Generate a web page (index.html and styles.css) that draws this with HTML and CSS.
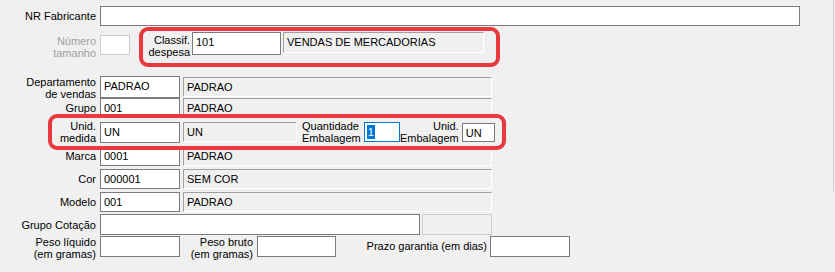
FILE: index.html
```html
<!DOCTYPE html>
<html lang="pt-BR">
<head>
  <meta charset="UTF-8" />
  <title>Cadastro de produto</title>
  <link rel="stylesheet" href="styles.css">
</head>
<body>
  <div class="form">

    <div class="row r-nr">
      <label class="lbl w96">NR Fabricante</label>
      <div class="box w700"></div>
    </div>

    <div class="row r-num">
      <label class="lbl w96 off">Número<br>tamanho</label>
      <div class="box off w30"></div>
      <div class="mark m-desp">
        <label class="lbl w47">Classif.<br>despesa</label>
        <div class="box w89 tall">101</div>
        <div class="ro w201">VENDAS DE MERCADORIAS</div>
      </div>
    </div>

    <div class="row r-dep">
      <label class="lbl w96">Departamento<br>de vendas</label>
      <div class="box w80 h22">PADRAO</div>
      <div class="ro w310">PADRAO</div>
    </div>

    <div class="row r-grp">
      <label class="lbl w96">Grupo</label>
      <div class="box w80">001</div>
      <div class="ro w310">PADRAO</div>
    </div>

    <div class="row mark r-unid">
      <label class="lbl w44">Unid.<br>medida</label>
      <div class="box w80 h21">UN</div>
      <div class="ro w114">UN</div>
      <label class="lbl left qtd">Quantidade<br>Embalagem</label>
      <div class="box w36 focus"><span class="sel">1</span></div>
      <label class="lbl w59">Unid.<br>Embalagem</label>
      <div class="box w33 h19">UN</div>
    </div>

    <div class="row r-marca">
      <label class="lbl w96">Marca</label>
      <div class="box w80">0001</div>
      <div class="ro w310">PADRAO</div>
    </div>

    <div class="row r-cor">
      <label class="lbl w96">Cor</label>
      <div class="box w80">000001</div>
      <div class="ro w310">SEM COR</div>
    </div>

    <div class="row r-mod">
      <label class="lbl w96">Modelo</label>
      <div class="box w80">001</div>
      <div class="ro w310">PADRAO</div>
    </div>

    <div class="row r-cot">
      <label class="lbl w96">Grupo Cotação</label>
      <div class="box w320 h21"></div>
      <div class="dis w70"></div>
    </div>

    <div class="row r-peso">
      <label class="lbl w96">Peso líquido<br>(em gramas)</label>
      <div class="box w80 h21"></div>
      <label class="lbl w69">Peso bruto<br>(em gramas)</label>
      <div class="box w79 h21"></div>
      <label class="lbl w147 pz">Prazo garantia (em dias)</label>
      <div class="box w80 h21"></div>
    </div>

  </div>
</body>
</html>
```

FILE: styles.css
```css
html, body {
  margin: 0;
  background-color: #f0f0f0;
}
body {
  position: relative;
  width: 835px;
  height: 272px;
  overflow: hidden;
  font-family: "Liberation Sans", Arial, sans-serif;
  font-size: 11px;
  color: #000;
}
/* borda do painel à direita */
body::after {
  content: "";
  position: absolute;
  left: 833px;
  top: 0;
  width: 1px;
  height: 191px;
  background-color: #cdcdcd;
}
.form {
  padding-top: 6px;
}
.row {
  display: flex;
  align-items: center;
  height: 20px;
}
.lbl {
  flex: none;
  text-align: right;
  line-height: 12px;
  margin-right: 4px;
}
.lbl.left {
  text-align: left;
}
.lbl.off {
  color: #a0a0a0;
}
.box {
  flex: none;
  box-sizing: border-box;
  height: 20px;
  background-color: #fff;
  border: 1px solid #7a7a7a;
  padding: 1px 3px;
  line-height: 16px;
  white-space: nowrap;
}
.box.off {
  border-color: #cccccc;
}
.box.focus {
  border-color: #0078d7;
  padding: 2px 2px;
  line-height: 14px;
}
.sel {
  display: inline-block;
  background-color: #0078d7;
  color: #fff;
  padding: 0 1px;
}
.ro {
  flex: none;
  box-sizing: border-box;
  height: 20px;
  margin-left: 3px;
  padding: 1px 3px;
  line-height: 16px;
  background-color: #f0f0f0;
  border: 1px solid;
  border-color: #a0a0a0 #fff #fff #a0a0a0;
  white-space: nowrap;
}
.dis {
  flex: none;
  box-sizing: border-box;
  height: 21px;
  margin-left: 2px;
  background-color: #f0f0f0;
  border: 1px solid #cfcfcf;
}
.mark {
  outline: 4px solid #e8393d;
  border-radius: 5px;
}

/* larguras */
.w30 { width: 30px; }
.w33 { width: 33px; }
.w36 { width: 36px; }
.w44 { width: 44px; }
.w47 { width: 47px; margin-right: 2px; }
.w59 { width: 59px; margin-right: 3px; }
.w69 { width: 69px; margin-left: 4px; }
.w70 { width: 70px; }
.w79 { width: 79px; }
.w80 { width: 80px; }
.w89 { width: 89px; }
.w96 { width: 96px; }
.w114 { width: 114px; }
.w147 { width: 147px; margin-left: 4px; margin-right: 3px; }
.w201 { width: 201px; margin-left: 2px; height: 21px; }
.w310 { width: 309px; }
.w320 { width: 320px; }
.w700 { width: 700px; }
.h19 { height: 19px; }
.h21 { height: 21px; }
.h22 { height: 22px; }
.tall { height: 23px; }

/* linhas */
.r-num {
  margin-top: 5px;
  height: 32px;
  align-items: flex-start;
}
.r-num .lbl.off {
  margin-top: 4px;
}
.r-num .box.off {
  margin-top: 4px;
}
.m-desp {
  display: flex;
  align-items: flex-start;
  margin-left: 13px;
  width: 353px;
  height: 32px;
}
.m-desp .lbl {
  margin-top: 3px;
}
.m-desp .box {
  margin-top: 1px;
}
.m-desp .ro {
  margin-top: 1px;
}
.r-dep {
  margin-top: 13px;
  height: 22px;
  align-items: flex-start;
}
.r-dep .ro {
  margin-top: 1px;
}
.r-grp {
  height: 20px;
}
.r-unid {
  height: 28px;
  width: 450px;
  margin-left: 52px;
}
.qtd {
  margin-left: 5px;
  margin-right: 3px;
}
.r-cor, .r-mod {
  margin-top: 3px;
}
.r-cot {
  margin-top: 2px;
  height: 21px;
}
.r-peso {
  margin-top: 1px;
  height: 21px;
  align-items: flex-start;
}
.r-peso .lbl {
  margin-top: 0;
}
.pz {
  margin-top: 4px;
}
.r-peso .w147 {
  line-height: 13px;
  padding-top: 4px;
}
```
